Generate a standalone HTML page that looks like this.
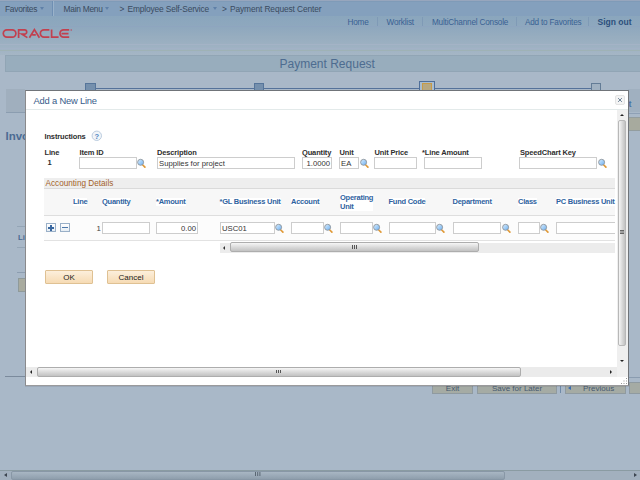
<!DOCTYPE html>
<html><head><meta charset="utf-8">
<style>
*{box-sizing:border-box;margin:0;padding:0}
html,body{width:640px;height:480px;overflow:hidden;background:#a9b8c8;font-family:"Liberation Sans",sans-serif}
.a{position:absolute;white-space:nowrap}
.ht{font-size:8.4px;letter-spacing:-0.25px;color:#3a4b60;top:3.5px}
.lk{font-size:8.2px;letter-spacing:-0.2px;color:#3a6193;top:17.6px}
.dd{width:0;height:0;border-left:2.5px solid transparent;border-right:2.5px solid transparent;border-top:3px solid #5f80a8;top:6.8px}
.lsep{width:1px;top:17px;height:9px;background:#7f9ab6}
.lbl{font-size:7.5px;letter-spacing:-0.15px;font-weight:bold;color:#2e2e2e}
.gh{font-size:7.5px;letter-spacing:-0.25px;font-weight:bold;color:#2f63a0;background:#fff;line-height:8px}
.inp{height:12px;border:1px solid #cdcdcd;background:#fff;font-size:7.7px;color:#333;line-height:12px;padding-left:1px}
.lu{width:10px;height:10px}
.btn{height:14px;border:1px solid #dfc193;background:linear-gradient(#fcefdc,#f6dbb4);font-size:8px;color:#222;text-align:center;line-height:14px;border-radius:1px}
.bgb{height:9.5px;background:#a5aba4;border:1px solid #8f9aa0;border-top:none;font-size:8px;color:#46596f;text-align:center;line-height:10px}
</style></head><body>
<svg width="0" height="0" style="position:absolute"><defs><linearGradient id="lg" x1="0" y1="0" x2="1" y2="1"><stop offset="0" stop-color="#dcefff"/><stop offset="1" stop-color="#6aaef0"/></linearGradient></defs></svg>
<!-- header bar -->
<div class="a" style="left:0;top:0;width:640px;height:16px;background:#84a0bd;border-top:1px solid #97a6bd"></div><div class="a" style="left:0;top:1px;width:640px;height:1px;background:#7f9bb8"></div>
<div class="a ht" style="left:5px">Favorites</div>
<div class="a dd" style="left:39.5px"></div>
<div class="a" style="left:52px;top:1px;width:1px;height:15px;background:#6f8fb3"></div>
<div class="a" style="left:53px;top:1px;width:1px;height:15px;background:#9ab2ca"></div>
<div class="a ht" style="left:63.5px">Main Menu</div>
<div class="a dd" style="left:105px"></div>
<div class="a ht" style="left:119.5px">&gt;</div>
<div class="a ht" style="left:127.5px;letter-spacing:-0.15px">Employee Self-Service</div>
<div class="a dd" style="left:212.5px"></div>
<div class="a ht" style="left:222px">&gt;</div>
<div class="a ht" style="left:230px;letter-spacing:-0.12px">Payment Request Center</div>

<!-- links area -->
<div class="a" style="left:0;top:16px;width:640px;height:39px;background:linear-gradient(#8aa6bd,#8fa8be 30%,#97adbf 55%,#9db1c2 75%,#a5b6c5)"></div>
<div class="a" style="left:0;top:26px;width:640px;height:1px;background:#8ea5bf"></div><div class="a" style="left:0;top:36px;width:640px;height:1px;background:#97adbf"></div>
<div class="a" style="left:0;top:44px;width:640px;height:1px;background:#a4b3c6"></div><div class="a" style="left:0;top:48px;width:640px;height:1px;background:#a2b2c6"></div>
<div class="a" style="left:0;top:50px;width:640px;height:1px;background:#9fb2b5"></div>
<div class="a lk" style="left:347.5px">Home</div>
<div class="a lsep" style="left:377px"></div>
<div class="a lk" style="left:386.5px">Worklist</div>
<div class="a lsep" style="left:422px"></div>
<div class="a lk" style="left:432px">MultiChannel Console</div>
<div class="a lsep" style="left:516px"></div>
<div class="a lk" style="left:525px">Add to Favorites</div>
<div class="a lsep" style="left:588px"></div>
<div class="a lk" style="left:597.5px;font-weight:bold;color:#2c4f7c;font-size:8.5px;letter-spacing:0;top:17.1px">Sign out</div>

<!-- oracle logo -->
<svg class="a" style="left:0;top:26px" width="76" height="16" viewBox="0 26 76 16">
<g fill="none" stroke="#c2404f" stroke-width="1.7">
<rect x="3.3" y="29.9" width="12.6" height="7.3" rx="3.65"/>
<path d="M18.6 37.9V29.9H24.6a2.1 2.1 0 0 1 0 4.2H21.8L27.4 37.6"/>
<path d="M29.4 37.8L34.4 29.6L39.4 37.8M32.2 34.8H35.8"/>
<path d="M49.4 29.9H44a3.65 3.65 0 0 0 0 7.3H49.4"/>
<path d="M51.6 29.4V37.2H58.6"/>
<path d="M69.2 29.9H63.6a3.65 3.65 0 0 0 0 7.3H69.2M61.5 33.55H68.5"/><circle cx="71.2" cy="30" r="0.5" stroke-width="0.6"/>
</g></svg>

<!-- title band -->
<div class="a" style="left:4.5px;top:55px;width:636px;height:17px;background:#98adbd;border:1px solid #91a5b5;border-right:none"></div>
<div class="a" style="left:279.5px;top:56.5px;font-size:12px;color:#4d6c90">Payment Request</div>

<!-- train -->
<div class="a" style="left:95px;top:88px;width:497px;height:1.2px;background:#55729a"></div>
<div class="a" style="left:85px;top:83px;width:11px;height:8px;background:#7590ad;border:1px solid #56759a"></div>
<div class="a" style="left:254px;top:83px;width:10px;height:8px;background:#7590ad;border:1px solid #56759a"></div>
<div class="a" style="left:419px;top:80.8px;width:16px;height:10px;background:#a9bdd0;border:1px solid #4f6f9a;border-bottom:none"></div><div class="a" style="left:421.8px;top:82.8px;width:10.4px;height:7.5px;background:#b7a881;border:1px solid #c79b48;border-bottom:none"></div>
<div class="a" style="left:591px;top:83px;width:10px;height:8px;background:#a0b1c1;border:1px solid #637c96"></div>

<!-- left side bg elements -->
<div class="a" style="left:6px;top:89px;width:19px;height:23px;background:#a0afbe"></div>
<div class="a" style="left:6px;top:112px;width:19px;height:1px;background:#8b9db0"></div>
<div class="a" style="left:5.5px;top:129.8px;font-size:11.5px;font-weight:bold;color:#4b6b93">Invo</div>
<div class="a" style="left:17px;top:226px;width:8px;height:1px;background:#94a5b6"></div>
<div class="a" style="left:18px;top:232.5px;font-size:7.8px;font-weight:bold;color:#4a6a92">Li</div><div class="a" style="left:17px;top:272px;width:8px;height:1px;background:#8c9db0"></div>
<div class="a" style="left:17px;top:247px;width:8px;height:1px;background:#94a5b6"></div>
<div class="a" style="left:18px;top:278px;width:8px;height:14px;background:#a9ab9f;border:1px solid #8f9a9a"></div>
<div class="a" style="left:5px;top:376px;width:20px;height:1px;background:#7b8a9c"></div>

<!-- right side bg elements -->
<div class="a" style="left:628px;top:89px;width:12px;height:23px;background:#a0b0c0"></div><div class="a" style="left:628px;top:112.5px;width:12px;height:1px;background:#8ea0b5"></div><div class="a" style="left:628.5px;top:98.5px;font-size:9px;font-weight:bold;color:#4a72a5">t</div>
<div class="a" style="left:628px;top:117px;width:12px;height:14px;background:#a7aa9e;border:1px solid #939d9f;border-right:none"></div>
<div class="a" style="left:628px;top:376.5px;width:12px;height:1px;background:#8a9cb0"></div>

<!-- bottom buttons of bg page -->
<div class="a bgb" style="left:432px;top:384px;width:41px">Exit</div>
<div class="a bgb" style="left:477px;top:384px;width:80px">Save for Later</div>
<div class="a" style="left:560px;top:385px;width:1px;height:8px;background:#6f8aa8"></div>
<div class="a bgb" style="left:565px;top:384px;width:61px;text-align:left;padding-left:17px">Previous</div><div class="a" style="left:567.5px;top:386px;width:0;height:0;border-top:2px solid transparent;border-bottom:2px solid transparent;border-right:3px solid #3a6cb0"></div>
<div class="a bgb" style="left:629px;top:381.5px;width:11px;height:12px;border-top:1px solid #8f9aa0;border-right:none"></div>

<!-- browser hscroll -->
<div class="a" style="left:0;top:470px;width:640px;height:10px;background:#a2b0be;border-top:1px solid #8a9ba2"></div>
<div class="a" style="left:4px;top:472.5px;width:0;height:0;border-top:2.5px solid transparent;border-bottom:2.5px solid transparent;border-right:3px solid #3d4550"></div>
<div class="a" style="left:11px;top:470.5px;width:493.5px;height:9.5px;background:linear-gradient(#a8b6c3,#99a8b6 60%,#8f9eac);border:1px solid #8897a6;border-radius:2px"></div>
<div class="a" style="left:254.5px;top:472.3px;width:1px;height:3.5px;background:#5a6773;box-shadow:2.2px 0 0 #5a6773,4.4px 0 0 #5a6773"></div>
<div class="a" style="left:634px;top:472.5px;width:0;height:0;border-top:2.5px solid transparent;border-bottom:2.5px solid transparent;border-left:3px solid #3d4550"></div>

<!-- modal -->
<div class="a" style="left:25px;top:90px;width:604px;height:296px;background:#fff;border:1px solid #707479;border-left-color:#8a8a8c;border-bottom-color:#9a9a9c;box-shadow:0 1px 0 rgba(60,60,70,0.12)"></div>
<div class="a" style="left:33.5px;top:95.3px;font-size:9.4px;letter-spacing:-0.2px;color:#375c8a">Add a New Line</div>
<div class="a" style="left:615.2px;top:95.2px;width:9.5px;height:9.5px;border:1px solid #e4e4e4;border-radius:2px;background:#f4f4f4"></div>
<svg class="a" style="left:615px;top:95px" width="10" height="10" viewBox="0 0 10 10"><path d="M3.1 3.1L6.9 6.9M6.9 3.1L3.1 6.9" stroke="#6f8499" stroke-width="1"/></svg>
<div class="a" style="left:26px;top:108.5px;width:602px;height:1.5px;background:#e3eaea"></div>

<!-- modal content -->
<div class="a lbl" style="left:44.5px;top:132px">Instructions</div>
<svg class="a" style="left:91px;top:130px" width="12" height="12" viewBox="0 0 12 12"><circle cx="5.8" cy="5.8" r="4.7" fill="#f2f5f9" stroke="#bccde0" stroke-width="1"/><text x="5.8" y="8.6" font-family="Liberation Sans" font-weight="bold" font-size="7.5" fill="#4f86c4" text-anchor="middle">?</text></svg>

<div class="a lbl" style="left:44.5px;top:148px">Line</div>
<div class="a lbl" style="left:47.5px;top:158px">1</div>

<div class="a lbl" style="left:79.5px;top:148px">Item ID</div>
<div class="a inp" style="left:79px;top:157px;width:58px"></div>
<svg class="a lu" style="left:136px;top:158px" viewBox="0 0 10 10"><path d="M6.8 7L8.9 9.1" stroke="#e09a38" stroke-width="1.7" stroke-linecap="round"/><circle cx="4.6" cy="4.3" r="3" fill="url(#lg)" stroke="#8d949b" stroke-width="0.9"/></svg>

<div class="a lbl" style="left:157px;top:148px">Description</div>
<div class="a inp" style="left:157px;top:157px;width:138px">Supplies for project</div>

<div class="a lbl" style="left:302px;top:148px">Quantity</div>
<div class="a inp" style="left:302px;top:157px;width:30px;text-align:right;padding-right:1px">1.0000</div>

<div class="a lbl" style="left:339.5px;top:148px">Unit</div>
<div class="a inp" style="left:339px;top:157px;width:20px">EA</div>
<svg class="a lu" style="left:359px;top:158px" viewBox="0 0 10 10"><path d="M6.8 7L8.9 9.1" stroke="#e09a38" stroke-width="1.7" stroke-linecap="round"/><circle cx="4.6" cy="4.3" r="3" fill="url(#lg)" stroke="#8d949b" stroke-width="0.9"/></svg>

<div class="a lbl" style="left:374.5px;top:148px">Unit Price</div>
<div class="a inp" style="left:374px;top:157px;width:43px"></div>

<div class="a lbl" style="left:422px;top:148px">*Line Amount</div>
<div class="a inp" style="left:424px;top:157px;width:58px"></div>

<div class="a lbl" style="left:520px;top:148px">SpeedChart Key</div>
<div class="a inp" style="left:519px;top:157px;width:78px"></div>
<svg class="a lu" style="left:597px;top:158px" viewBox="0 0 10 10"><path d="M6.8 7L8.9 9.1" stroke="#e09a38" stroke-width="1.7" stroke-linecap="round"/><circle cx="4.6" cy="4.3" r="3" fill="url(#lg)" stroke="#8d949b" stroke-width="0.9"/></svg>

<!-- accounting details -->
<div class="a" style="left:44px;top:177.5px;width:571px;height:11.5px;background:#eeeeee;border-bottom:1px solid #dadada"></div>
<div class="a" style="left:45.5px;top:178.5px;font-size:8.2px;color:#a3612a">Accounting Details</div>
<div class="a" style="left:44px;top:189px;width:571px;height:27px;background:#f7f7f7;border-bottom:1.5px solid #dedede"></div>
<div class="a" style="left:44px;top:216px;width:571px;height:25px;background:#fcfcfc;border-bottom:1.5px solid #e2e2e2"></div>
<div class="a gh" style="left:73px;top:198.2px">Line</div>
<div class="a gh" style="left:102px;top:198.2px">Quantity</div>
<div class="a gh" style="left:156px;top:198.2px">*Amount</div>
<div class="a gh" style="left:219.5px;top:198.2px">*GL Business Unit</div>
<div class="a gh" style="left:291px;top:198.2px">Account</div>
<div class="a gh" style="left:340px;top:194.2px;line-height:8.4px">Operating<br>Unit</div>
<div class="a gh" style="left:388.5px;top:198.2px">Fund Code</div>
<div class="a gh" style="left:452.5px;top:198.2px">Department</div>
<div class="a gh" style="left:518px;top:198.2px">Class</div>
<div class="a gh" style="left:556px;top:198.2px;width:60px;overflow:hidden">PC Business Unit</div>

<div class="a" style="left:46px;top:223.3px;width:10px;height:9px;border:1px solid #9ab0c8;background:linear-gradient(#fff,#e6edf4)"></div>
<div class="a" style="left:48.2px;top:227.2px;width:5.6px;height:1.4px;background:#3a68a0"></div>
<div class="a" style="left:50.3px;top:225px;width:1.4px;height:5.6px;background:#3a68a0"></div>
<div class="a" style="left:60px;top:223.3px;width:10px;height:9px;border:1px solid #9ab0c8;background:linear-gradient(#fff,#e6edf4)"></div>
<div class="a" style="left:62.2px;top:227.3px;width:5.6px;height:1.2px;background:#4d78aa"></div>
<div class="a" style="left:96.5px;top:223.5px;font-size:7.8px;color:#444">1</div>
<div class="a inp" style="left:102px;top:222px;width:48px"></div>
<div class="a inp" style="left:156px;top:222px;width:42px;text-align:right;padding-right:1px">0.00</div>
<div class="a inp" style="left:220px;top:222px;width:54.5px">USC01</div>
<svg class="a lu" style="left:274px;top:223px" viewBox="0 0 10 10"><path d="M6.8 7L8.9 9.1" stroke="#e09a38" stroke-width="1.7" stroke-linecap="round"/><circle cx="4.6" cy="4.3" r="3" fill="url(#lg)" stroke="#8d949b" stroke-width="0.9"/></svg>
<div class="a inp" style="left:291px;top:222px;width:32.5px"></div>
<svg class="a lu" style="left:323px;top:223px" viewBox="0 0 10 10"><path d="M6.8 7L8.9 9.1" stroke="#e09a38" stroke-width="1.7" stroke-linecap="round"/><circle cx="4.6" cy="4.3" r="3" fill="url(#lg)" stroke="#8d949b" stroke-width="0.9"/></svg>
<div class="a inp" style="left:340px;top:222px;width:32.5px"></div>
<svg class="a lu" style="left:372px;top:223px" viewBox="0 0 10 10"><path d="M6.8 7L8.9 9.1" stroke="#e09a38" stroke-width="1.7" stroke-linecap="round"/><circle cx="4.6" cy="4.3" r="3" fill="url(#lg)" stroke="#8d949b" stroke-width="0.9"/></svg>
<div class="a inp" style="left:388.5px;top:222px;width:47.5px"></div>
<svg class="a lu" style="left:435px;top:223px" viewBox="0 0 10 10"><path d="M6.8 7L8.9 9.1" stroke="#e09a38" stroke-width="1.7" stroke-linecap="round"/><circle cx="4.6" cy="4.3" r="3" fill="url(#lg)" stroke="#8d949b" stroke-width="0.9"/></svg>
<div class="a inp" style="left:452.5px;top:222px;width:48.5px"></div>
<svg class="a lu" style="left:501px;top:223px" viewBox="0 0 10 10"><path d="M6.8 7L8.9 9.1" stroke="#e09a38" stroke-width="1.7" stroke-linecap="round"/><circle cx="4.6" cy="4.3" r="3" fill="url(#lg)" stroke="#8d949b" stroke-width="0.9"/></svg>
<div class="a inp" style="left:518px;top:222px;width:21.5px"></div>
<svg class="a lu" style="left:539px;top:223px" viewBox="0 0 10 10"><path d="M6.8 7L8.9 9.1" stroke="#e09a38" stroke-width="1.7" stroke-linecap="round"/><circle cx="4.6" cy="4.3" r="3" fill="url(#lg)" stroke="#8d949b" stroke-width="0.9"/></svg>
<div class="a inp" style="left:556px;top:222px;width:59px;border-right:none"></div>

<!-- grid hscroll -->
<div class="a" style="left:219.5px;top:242.5px;width:395.5px;height:10px;background:#ececec"></div>
<div class="a" style="left:222.5px;top:245.5px;width:0;height:0;border-top:2px solid transparent;border-bottom:2px solid transparent;border-right:2.5px solid #333"></div>
<div class="a" style="left:229.5px;top:242.3px;width:249px;height:9.4px;border:1px solid #adadad;border-radius:2px;background:linear-gradient(#f6f6f6,#d8d8d8 55%,#c2c2c2)"></div>
<div class="a" style="left:351.5px;top:245px;width:1px;height:3.5px;background:#555;box-shadow:2px 0 0 #555,4px 0 0 #555"></div>

<!-- buttons -->
<div class="a btn" style="left:45px;top:270px;width:48px">OK</div>
<div class="a btn" style="left:107px;top:270px;width:48px">Cancel</div>

<!-- modal vscroll -->
<div class="a" style="left:617px;top:110px;width:11px;height:257px;background:#efefef"></div>
<div class="a" style="left:620px;top:114px;width:0;height:0;border-left:2px solid transparent;border-right:2px solid transparent;border-bottom:2.5px solid #222"></div>
<div class="a" style="left:617.5px;top:120px;width:8px;height:225.5px;border:1px solid #b8b8b8;border-radius:2px;background:linear-gradient(90deg,#f6f6f6,#d8d8d8 55%,#c2c2c2)"></div>
<div class="a" style="left:619.5px;top:230px;width:4px;height:1px;background:#666;box-shadow:0 1.5px 0 #666,0 3px 0 #666"></div>
<div class="a" style="left:620px;top:360px;width:0;height:0;border-left:2px solid transparent;border-right:2px solid transparent;border-top:2.5px solid #222"></div>

<!-- modal hscroll -->
<div class="a" style="left:26px;top:367px;width:591px;height:9.5px;background:#ebebeb"></div>
<div class="a" style="left:617px;top:367px;width:11px;height:9.5px;background:#f0f0f0"></div>
<div class="a" style="left:29.5px;top:370px;width:0;height:0;border-top:2px solid transparent;border-bottom:2px solid transparent;border-right:2.5px solid #222"></div>
<div class="a" style="left:37px;top:367px;width:484px;height:9.5px;border:1px solid #adadad;border-radius:2px;background:linear-gradient(#f6f6f6,#d8d8d8 55%,#c2c2c2)"></div>
<div class="a" style="left:275.5px;top:369.8px;width:1px;height:3.5px;background:#555;box-shadow:2px 0 0 #555,4px 0 0 #555"></div>
<div class="a" style="left:610px;top:370px;width:0;height:0;border-top:2px solid transparent;border-bottom:2px solid transparent;border-left:2.5px solid #222"></div>
<!-- resize grip -->
<div class="a" style="left:626px;top:377.5px;width:1px;height:1px;background:#999;box-shadow:0 2.5px 0 #999,0 5px 0 #999,-2.5px 2.5px 0 #999,-2.5px 5px 0 #999,-5px 5px 0 #999"></div>
</body></html>
